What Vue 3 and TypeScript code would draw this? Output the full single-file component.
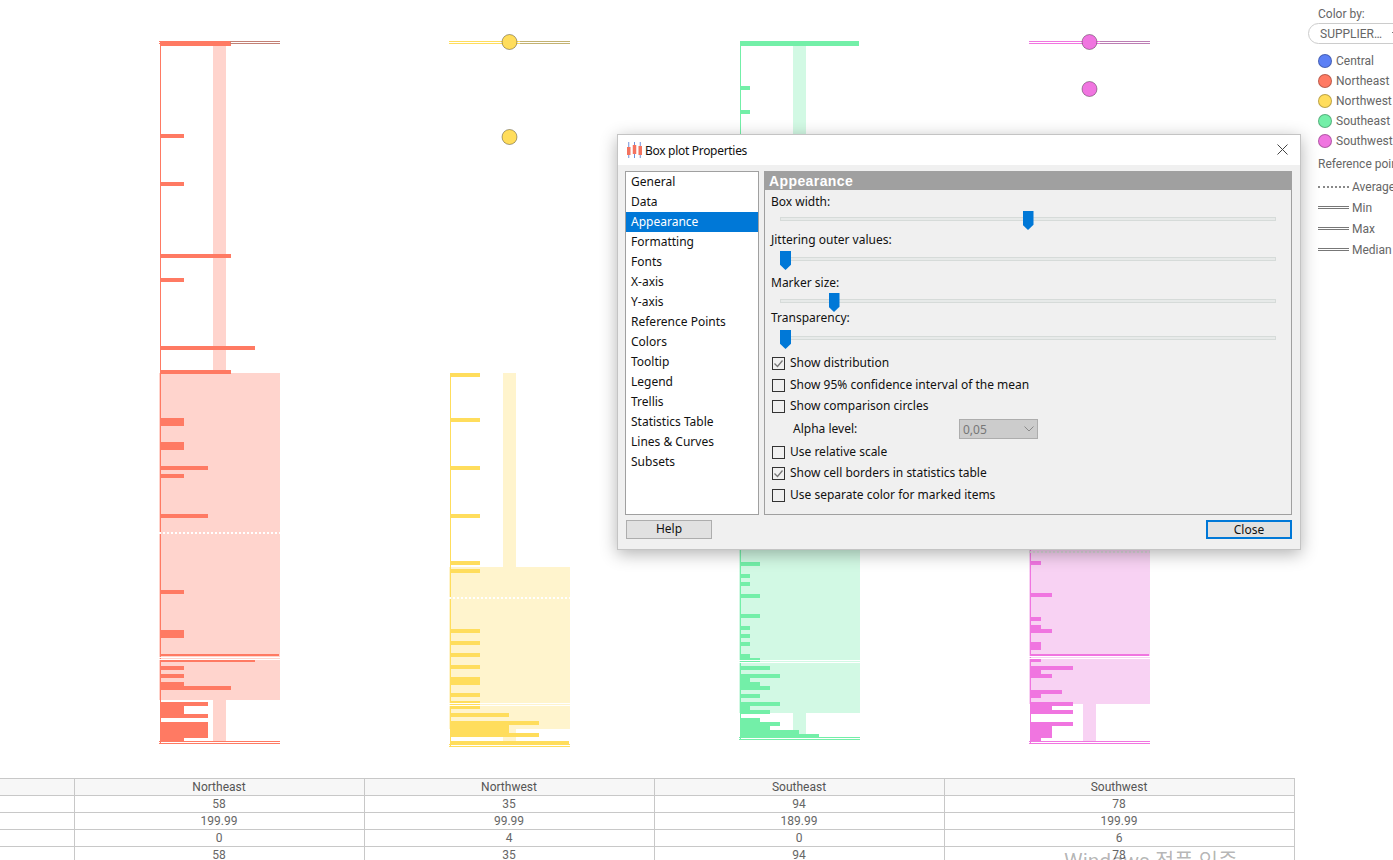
<script setup lang="ts">
type Bar = [number, number, number]

interface Series {
	name: string
	x: number
	color: string
	tint: string
	top: number
	bottom: number
	axisTop: number
	box: [number, number]
	whisker: [number, number][]
	median: number
	mean?: number
	meanColor?: string
	bars: Bar[]
	markers: number[]
}

const series: Series[] = [
	{
		name: 'Northeast', x: 159, color: '#ff7a63', tint: '#ffd4cd', top: 41, bottom: 741, axisTop: 42,
		box: [373, 700], whisker: [[46, 373], [700, 741]], median: 657, mean: 532, markers: [],
		bars: [
			[41, 5, 71], [134, 4, 24], [182, 4, 24], [254, 4, 71], [278, 4, 24], [346, 4, 95], [370, 4, 71],
			[418, 8, 24], [442, 8, 24], [466, 4, 48], [474, 4, 24], [514, 4, 48], [590, 4, 24], [630, 8, 24],
			[654, 2, 119], [659, 3, 95], [666, 4, 24], [674, 4, 24], [682, 4, 24], [686, 4, 71], [702, 4, 48],
			[706, 8, 24], [714, 4, 48], [722, 16, 48], [738, 4, 24],
		],
	},
	{
		name: 'Northwest', x: 449, color: '#ffdd5c', tint: '#fff4cd', top: 41, bottom: 744, axisTop: 373,
		box: [567, 729], whisker: [[373, 567], [729, 744]], median: 703, mean: 597, markers: [42, 137],
		bars: [
			[373, 4, 30], [418, 4, 30], [466, 4, 30], [514, 4, 30], [561, 4, 30], [569, 4, 30], [629, 4, 30],
			[641, 4, 30], [653, 4, 30], [665, 4, 30], [677, 8, 30], [693, 4, 30], [701, 8, 30], [713, 4, 59],
			[721, 4, 89], [725, 8, 59], [733, 4, 89], [741, 4, 119],
		],
	},
	{
		name: 'Southeast', x: 739, color: '#73efa8', tint: '#d2f9e4', top: 737, bottom: 737, axisTop: 42,
		box: [400, 713], whisker: [[46, 400], [713, 737]], median: 660, markers: [],
		bars: [
			[41, 5, 119], [86, 4, 10], [110, 4, 10], [134, 4, 10], [562, 4, 20], [574, 4, 10], [582, 4, 10],
			[594, 4, 20], [614, 4, 20], [626, 4, 10], [634, 4, 10], [642, 4, 10], [654, 4, 10], [658, 4, 20],
			[666, 4, 30], [674, 4, 40], [678, 4, 10], [682, 4, 20], [686, 4, 30], [694, 4, 20], [702, 4, 40],
			[706, 4, 10], [710, 4, 30], [718, 4, 20], [722, 4, 40], [726, 4, 30], [730, 4, 59], [734, 4, 79],
		],
	},
	{
		name: 'Southwest', x: 1029, color: '#f075e0', tint: '#f8d2f3', top: 41, bottom: 741, axisTop: 400,
		box: [400, 704], whisker: [[704, 741]], median: 656, mean: 551, meanColor: '#ddd', markers: [42, 89],
		bars: [
			[561, 4, 11], [593, 4, 22], [617, 4, 11], [625, 4, 11], [629, 4, 22], [642, 8, 11], [654, 2, 119],
			[659, 3, 11], [666, 4, 43], [670, 4, 11], [674, 4, 22], [690, 4, 32], [694, 4, 11], [702, 4, 43],
			[706, 4, 22], [710, 4, 43], [722, 4, 43], [726, 12, 22], [738, 3, 11],
		],
	},
]

const legendItems = [
	{ name: 'Central', color: '#5c80f5' },
	{ name: 'Northeast', color: '#ff7a63' },
	{ name: 'Northwest', color: '#ffdd5c' },
	{ name: 'Southeast', color: '#73efa8' },
	{ name: 'Southwest', color: '#f075e0' },
]

const refLines = [
	{ name: 'Average', dotted: true },
	{ name: 'Min', dotted: false },
	{ name: 'Max', dotted: false },
	{ name: 'Median', dotted: false },
]

const tableRows = [
	['', 'Northeast', 'Northwest', 'Southeast', 'Southwest'],
	['', '58', '35', '94', '78'],
	['', '199.99', '99.99', '189.99', '199.99'],
	['', '0', '4', '0', '6'],
	['', '58', '35', '94', '78'],
]

const pages = [
	'General', 'Data', 'Appearance', 'Formatting', 'Fonts', 'X-axis', 'Y-axis', 'Reference Points',
	'Colors', 'Tooltip', 'Legend', 'Trellis', 'Statistics Table', 'Lines & Curves', 'Subsets',
]

const sliders = [
	{ label: 'Box width:', value: 50 },
	{ label: 'Jittering outer values:', value: 0 },
	{ label: 'Marker size:', value: 10 },
	{ label: 'Transparency:', value: 0 },
]

const upperChecks = [
	{ label: 'Show distribution', checked: true },
	{ label: 'Show 95% confidence interval of the mean', checked: false },
	{ label: 'Show comparison circles', checked: false },
]

const lowerChecks = [
	{ label: 'Use relative scale', checked: false },
	{ label: 'Show cell borders in statistics table', checked: true },
	{ label: 'Use separate color for marked items', checked: false },
]

const thumbLeft = (value: number) => `${(value / 100) * 485}px`
</script>

<template>
	<div class="page">
		<div class="top">
			<svg class="chart" width="1307" height="778" viewBox="0 0 1307 778" shape-rendering="crispEdges">
				<g v-for="s in series" :key="s.name">
					<rect
						v-for="w in s.whisker"
						:key="w[0]"
						:x="s.x + 54"
						:y="w[0]"
						width="13"
						:height="w[1] - w[0]"
						:fill="s.tint"
					/>
					<rect :x="s.x" :y="s.box[0]" width="121" :height="s.box[1] - s.box[0]" :fill="s.tint" />
					<rect :x="s.x + 1" :y="s.axisTop" width="1" :height="s.bottom + 2 - s.axisTop" :fill="s.color" />
					<rect
						v-for="b in s.bars"
						:key="b[0]"
						:x="s.x + 1"
						:y="b[0]"
						:width="b[2]"
						:height="b[1]"
						:fill="s.color"
					/>
					<rect :x="s.x" :y="s.median" width="121" height="1" fill="#fff" />
					<rect :x="s.x" :y="s.median + 2" width="121" height="1" fill="#fff" />
					<line
						v-if="s.mean"
						:x1="s.x"
						:x2="s.x + 121"
						:y1="s.mean + 1"
						:y2="s.mean + 1"
						:stroke="s.meanColor ?? '#fff'"
						stroke-width="2"
						stroke-dasharray="2 2"
					/>
					<rect :x="s.x" :y="s.top" width="121" height="1" :fill="s.color" />
					<rect :x="s.x" :y="s.top + 2" width="121" height="1" :fill="s.color" />
					<rect :x="s.x + 71" :y="s.top" width="50" height="1" fill="#888" opacity="0.5" />
					<rect :x="s.x + 71" :y="s.top + 2" width="50" height="1" fill="#888" opacity="0.5" />
					<rect :x="s.x" :y="s.bottom" width="121" height="1" :fill="s.color" />
					<rect :x="s.x" :y="s.bottom + 2" width="121" height="1" :fill="s.color" />
					<circle
						v-for="m in s.markers"
						:key="m"
						:cx="s.x + 60.5"
						:cy="m"
						r="7.5"
						:fill="s.color"
						stroke="#000"
						stroke-opacity="0.35"
						shape-rendering="auto"
					/>
				</g>
			</svg>

			<aside class="legend">
				<div class="legendTitle">Color by:</div>
				<div class="pill">
					<span>SUPPLIER…</span>
					<svg width="8" height="5" viewBox="0 0 8 5"><path d="M1 1l3 3 3-3" fill="none" stroke="#777" /></svg>
				</div>
				<ul class="legendList">
					<li v-for="item in legendItems" :key="item.name">
						<i class="dot" :style="{ background: item.color }"></i>{{ item.name }}
					</li>
				</ul>
				<div class="refTitle">Reference points</div>
				<ul class="refList">
					<li v-for="line in refLines" :key="line.name">
						<i :class="line.dotted ? 'refDotted' : 'refDouble'"></i>{{ line.name }}
					</li>
				</ul>
			</aside>
		</div>

		<div class="table">
			<template v-for="(row, r) in tableRows" :key="r">
				<div v-for="(cell, c) in row" :key="c" class="cell" :class="{ head: r === 0 }">{{ cell }}</div>
			</template>
		</div>

		<div class="watermark">Windows 정품 인증</div>

		<section class="dialog">
			<header class="titleBar">
				<svg class="appIcon" width="15" height="16" viewBox="0 0 15 16">
					<path d="M1.75 0v16M7.5 0v16M13.25 0v16" stroke="#6f8fd8" stroke-width="1" fill="none" />
					<rect x="0" y="5" width="3.5" height="8" fill="#f4735f" />
					<rect x="5.75" y="3" width="3.5" height="9" fill="#f4735f" />
					<rect x="11.5" y="4" width="3.5" height="9" fill="#f4735f" />
				</svg>
				<span class="titleText">Box plot Properties</span>
				<svg class="closeIcon" width="11" height="11" viewBox="0 0 11 11">
					<path d="M.5.5l10 10M10.5.5l-10 10" stroke="#444" fill="none" />
				</svg>
			</header>

			<div class="dialogBody">
				<ul class="pageList">
					<li v-for="p in pages" :key="p" :class="{ selected: p === 'Appearance' }">{{ p }}</li>
				</ul>

				<div class="panel">
					<div class="panelHead">Appearance</div>
					<div class="panelBody">
						<div v-for="s in sliders" :key="s.label" class="slider">
							<div class="sliderLabel">{{ s.label }}</div>
							<div class="sliderControl">
								<div class="track"></div>
								<div class="thumb" :style="{ left: thumbLeft(s.value) }"></div>
							</div>
						</div>

						<div class="checks">
							<label v-for="c in upperChecks" :key="c.label" class="check">
								<span class="box">
									<svg v-if="c.checked" width="11" height="11" viewBox="0 0 11 11">
										<path d="M1.5 5.5l3 3 5-6" stroke="#777" stroke-width="1.3" fill="none" />
									</svg>
								</span>
								{{ c.label }}
							</label>
							<div class="alpha">
								<span class="alphaLabel">Alpha level:</span>
								<div class="alphaSelect">
									<span>0,05</span>
									<svg width="10" height="6" viewBox="0 0 10 6"><path d="M.5.5l4.5 4.5 4.5-4.5" stroke="#8a8a8a" fill="none" /></svg>
								</div>
							</div>
							<label v-for="c in lowerChecks" :key="c.label" class="check">
								<span class="box">
									<svg v-if="c.checked" width="11" height="11" viewBox="0 0 11 11">
										<path d="M1.5 5.5l3 3 5-6" stroke="#777" stroke-width="1.3" fill="none" />
									</svg>
								</span>
								{{ c.label }}
							</label>
						</div>
					</div>
				</div>
			</div>

			<footer class="dialogFooter">
				<button class="btn">Help</button>
				<button class="btn primary">Close</button>
			</footer>
		</section>
	</div>
</template>

<style>
html,
body {
	margin: 0;
	background: #fff;
}
</style>

<style scoped>
.page {
	position: relative;
	width: 1393px;
	height: 860px;
	overflow: hidden;
	background: #fff;
	font-family: Roboto, "Noto Sans CJK KR", sans-serif;
	font-size: 12px;
	color: #666;
}

.top {
	display: flex;
	height: 778px;
}

.chart {
	display: block;
	flex: none;
}

.legend {
	flex: 1;
	min-width: 0;
	overflow: hidden;
	white-space: nowrap;
}

.legendTitle {
	padding: 7px 0 0 11px;
	line-height: 15px;
}

.pill {
	display: flex;
	align-items: center;
	justify-content: space-between;
	box-sizing: border-box;
	width: 100px;
	height: 21px;
	margin: 1px 0 0 1px;
	padding: 0 0 0 11px;
	border: 1px solid #ccc;
	border-radius: 11px;
}

.pill svg {
	margin-right: 8px;
}

.legendList,
.refList {
	list-style: none;
	margin: 0;
	padding: 0;
}

.legendList {
	margin-top: 7px;
	padding-left: 11px;
}

.legendList li {
	display: flex;
	align-items: center;
	height: 20px;
}

.dot {
	flex: none;
	box-sizing: border-box;
	width: 14px;
	height: 14px;
	margin-right: 4px;
	border: 1px solid rgba(0, 0, 0, 0.25);
	border-radius: 50%;
}

.refTitle {
	padding: 5px 0 0 11px;
	line-height: 16px;
}

.refList {
	margin-top: 4px;
	padding-left: 11px;
}

.refList li {
	display: flex;
	align-items: center;
	height: 21px;
}

.refDotted,
.refDouble {
	flex: none;
	box-sizing: border-box;
	width: 31px;
	margin-right: 3px;
}

.refDotted {
	border-top: 2px dotted #888;
}

.refDouble {
	height: 3px;
	border-top: 1px solid #777;
	border-bottom: 1px solid #777;
}

.table {
	display: grid;
	grid-template-columns: 75px 290px 290px 290px 350px;
	grid-auto-rows: 17px;
	width: 1295px;
	border-top: 1px solid #c8c8c8;
	box-sizing: border-box;
}

.cell {
	box-sizing: border-box;
	padding-right: 1px;
	border-right: 1px solid #c8c8c8;
	border-bottom: 1px solid #c8c8c8;
	line-height: 16px;
	text-align: center;
}

.head {
	background: #f7f7f7;
	color: #555;
}

.watermark {
	position: absolute;
	left: 1064px;
	top: 846px;
	font-size: 21px;
	line-height: 30px;
	color: rgba(0, 0, 0, 0.3);
	white-space: nowrap;
}

.dialog {
	position: absolute;
	left: 617px;
	top: 134px;
	box-sizing: border-box;
	width: 684px;
	height: 416px;
	background: #f0f0f0;
	border: 1px solid #c4c4c4;
	box-shadow: 0 4px 16px rgba(0, 0, 0, 0.3);
	font-family: "Noto Sans", sans-serif;
	color: #111;
}

.titleBar {
	position: relative;
	display: flex;
	align-items: center;
	height: 30px;
	background: #fff;
}

.appIcon {
	margin-left: 9px;
}

.titleText {
	margin-left: 3px;
	letter-spacing: -0.3px;
}

.closeIcon {
	position: absolute;
	right: 12px;
	top: 9px;
}

.dialogBody {
	display: flex;
	gap: 5px;
	height: 344px;
	margin-top: 6px;
	padding: 0 8px 0 7px;
}

.pageList {
	box-sizing: border-box;
	width: 134px;
	margin: 0;
	padding: 0;
	list-style: none;
	background: #fff;
	border: 1px solid #a0a0a0;
}

.pageList li {
	height: 20px;
	padding-left: 5px;
	line-height: 19px;
}

.pageList .selected {
	background: #0078d7;
	color: #fff;
}

.panel {
	flex: 1;
	box-sizing: border-box;
	border: 1px solid #a0a0a0;
}

.panelHead {
	height: 18px;
	padding-left: 4px;
	background: #a0a0a0;
	font-family: "Liberation Sans", sans-serif;
	font-size: 14px;
	font-weight: 700;
	letter-spacing: 0.4px;
	line-height: 18px;
	color: #fff;
}

.panelBody {
	padding-top: 3px;
}

.sliderLabel {
	height: 16px;
	padding-left: 6px;
	line-height: 18px;
}

.sliderControl {
	position: relative;
	height: 20px;
	margin-left: 15px;
}

.track {
	position: absolute;
	left: 0;
	top: 8px;
	box-sizing: border-box;
	width: 496px;
	height: 4px;
	background: #e7eae9;
	border: 1px solid #d6dbd9;
}

.thumb {
	position: absolute;
	top: 2px;
	width: 11px;
	height: 19px;
	background: #0078d7;
	clip-path: polygon(0 0, 100% 0, 100% 72%, 50% 100%, 0 72%);
}

.slider:nth-child(2) {
	margin-top: 2px;
}

.slider:nth-child(2) .sliderLabel {
	margin-bottom: 2px;
}

.slider:nth-child(3) {
	margin-top: 5px;
}

.slider:nth-child(3) .sliderLabel {
	margin-bottom: 1px;
}

.slider:nth-child(4) {
	margin-top: -2px;
}

.slider:nth-child(4) .sliderLabel {
	margin-bottom: 3px;
}

.checks {
	margin-top: 4px;
}

.check {
	display: flex;
	align-items: center;
	height: 21.5px;
	padding-left: 7px;
}

.box {
	display: flex;
	align-items: center;
	justify-content: center;
	box-sizing: border-box;
	width: 13px;
	height: 13px;
	margin-top: 2px;
	margin-right: 5px;
	border: 1px solid #333;
}

.alpha {
	display: flex;
	align-items: center;
	height: 24px;
	padding-left: 28px;
}

.alphaLabel {
	width: 166px;
}

.alphaSelect {
	display: flex;
	align-items: center;
	justify-content: space-between;
	box-sizing: border-box;
	width: 79px;
	height: 20px;
	margin-top: 1px;
	padding: 0 3px 0 3px;
	background: #ccc;
	border: 1px solid #adadad;
	color: #777;
}

.dialogFooter {
	display: flex;
	justify-content: space-between;
	margin-top: 5px;
	padding: 0 8px;
}

.btn {
	box-sizing: border-box;
	width: 86px;
	height: 19px;
	padding: 0 0 2px;
	background: #e1e1e1;
	border: 1px solid #adadad;
	font: inherit;
	line-height: 15px;
	color: #111;
}

.primary {
	border: 2px solid #0078d7;
}
</style>
